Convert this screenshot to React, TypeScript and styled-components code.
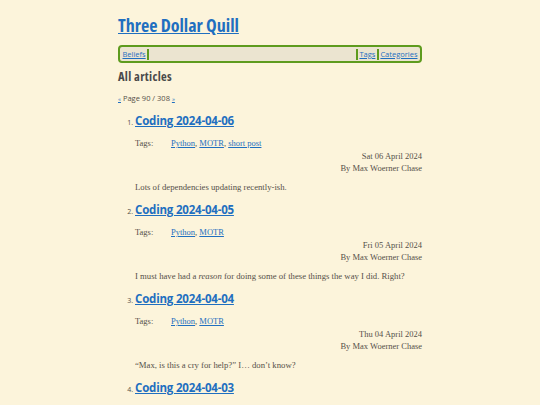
import styled, { createGlobalStyle } from "styled-components";

const colors = {
  bg: "#fcf4db",
  link: "#1f6fc0",
  text: "#555049",
  heading: "#4a4a4a",
  navBorder: "#5e9b1e",
  navBg: "#ebe4d0",
};

const SANS = `"Open Sans", "Noto Sans", sans-serif`;
const SERIF = `"Liberation Serif", serif`;

const GlobalStyle = createGlobalStyle`
  html, body {
    margin: 0;
    padding: 0;
    background: ${colors.bg};
  }
  body {
    font-family: ${SERIF};
    color: ${colors.text};
  }
  a {
    color: ${colors.link};
  }
`;

const Page = styled.div`
  width: 304px;
  margin: 0 auto;
  padding-top: 14px;
`;

const SiteTitle = styled.h1`
  margin: 0;
  font-family: ${SANS};
  font-stretch: 84%;
  font-size: 18px;
  line-height: 22px;
  font-weight: 700;
  a {
    color: ${colors.link};
  }
`;

const Nav = styled.nav`
  display: flex;
  align-items: center;
  margin-top: 9px;
  height: 12px;
  padding: 1px 1px;
  border: 2px solid ${colors.navBorder};
  border-radius: 4px;
  background: ${colors.navBg};
  font-family: ${SANS};
  font-size: 7.5px;
`;

const NavLink = styled.a<{ $left?: boolean; $right?: boolean }>`
  padding: 0 1.5px;
  line-height: 11px;
  border-left: ${(p) => (p.$left ? `2px solid ${colors.navBorder}` : "none")};
  border-right: ${(p) => (p.$right ? `2px solid ${colors.navBorder}` : "none")};
`;

const Spacer = styled.span`
  flex: 1;
`;

const SectionTitle = styled.h2`
  margin: 6px 0 0;
  font-family: ${SANS};
  font-stretch: 87.5%;
  font-size: 12.5px;
  letter-spacing: 0.3px;
  line-height: 16px;
  font-weight: 700;
  color: ${colors.heading};
`;

const Pager = styled.p`
  margin: 8px 0 0;
  font-family: ${SANS};
  font-size: 7.5px;
  line-height: 10px;
  color: ${colors.text};
  a {
    font-size: 6px;
  }
`;

const List = styled.ol`
  margin: 9px 0 0;
  padding-left: 17px;
`;

const Item = styled.li`
  font-family: ${SANS};
  font-size: 7px;
  margin-bottom: 9px;
  &::marker {
    color: ${colors.text};
  }
`;

const ArticleTitle = styled.h3`
  display: inline;
  margin: 0;
  font-family: ${SANS};
  font-size: 11.5px;
  letter-spacing: -0.2px;
  line-height: 16px;
  font-weight: 700;
`;

const Tags = styled.div`
  display: grid;
  grid-template-columns: 36px 1fr;
  margin-top: 9px;
  font-family: ${SERIF};
  font-size: 8.5px;
  line-height: 10px;
`;

const Meta = styled.div`
  margin-top: 2px;
  text-align: right;
  font-family: ${SERIF};
  font-size: 8.5px;
  line-height: 12px;
`;

const Excerpt = styled.p`
  margin: 7px 0 0;
  font-family: ${SERIF};
  font-size: 8.7px;
  line-height: 12px;
`;

interface IArticle {
  title: string;
  tags: string[];
  date: string;
  excerpt: React.ReactNode;
}

const articles: IArticle[] = [
  {
    title: "Coding 2024-04-06",
    tags: ["Python", "MOTR", "short post"],
    date: "Sat 06 April 2024",
    excerpt: "Lots of dependencies updating recently-ish.",
  },
  {
    title: "Coding 2024-04-05",
    tags: ["Python", "MOTR"],
    date: "Fri 05 April 2024",
    excerpt: (
      <>
        I must have had a <em>reason</em> for doing some of these things the
        way I did. Right?
      </>
    ),
  },
  {
    title: "Coding 2024-04-04",
    tags: ["Python", "MOTR"],
    date: "Thu 04 April 2024",
    excerpt: "\u201cMax, is this a cry for help?\u201d I\u2026 don\u2019t know?",
  },
  {
    title: "Coding 2024-04-03",
    tags: ["Python", "MOTR"],
    date: "Wed 03 April 2024",
    excerpt: "More of the same.",
  },
];

const App = () => (
  <>
    <GlobalStyle />
    <Page>
      <SiteTitle>
        <a href="#">Three Dollar Quill</a>
      </SiteTitle>
      <Nav>
        <NavLink href="#" $right>
          Beliefs
        </NavLink>
        <Spacer />
        <NavLink href="#" $left $right>
          Tags
        </NavLink>
        <NavLink href="#">Categories</NavLink>
      </Nav>
      <SectionTitle>All articles</SectionTitle>
      <Pager>
        <a href="#">«</a> Page 90 / 308 <a href="#">»</a>
      </Pager>
      <List>
        {articles.map(({ title, tags, date, excerpt }) => (
          <Item key={title}>
            <ArticleTitle>
              <a href="#">{title}</a>
            </ArticleTitle>
            <Tags>
              <span>Tags:</span>
              <span>
                {tags.map((tag, i) => (
                  <span key={tag}>
                    <a href="#">{tag}</a>
                    {i < tags.length - 1 ? ", " : ""}
                  </span>
                ))}
              </span>
            </Tags>
            <Meta>
              {date}
              <br />
              By Max Woerner Chase
            </Meta>
            <Excerpt>{excerpt}</Excerpt>
          </Item>
        ))}
      </List>
    </Page>
  </>
);

export default App;
